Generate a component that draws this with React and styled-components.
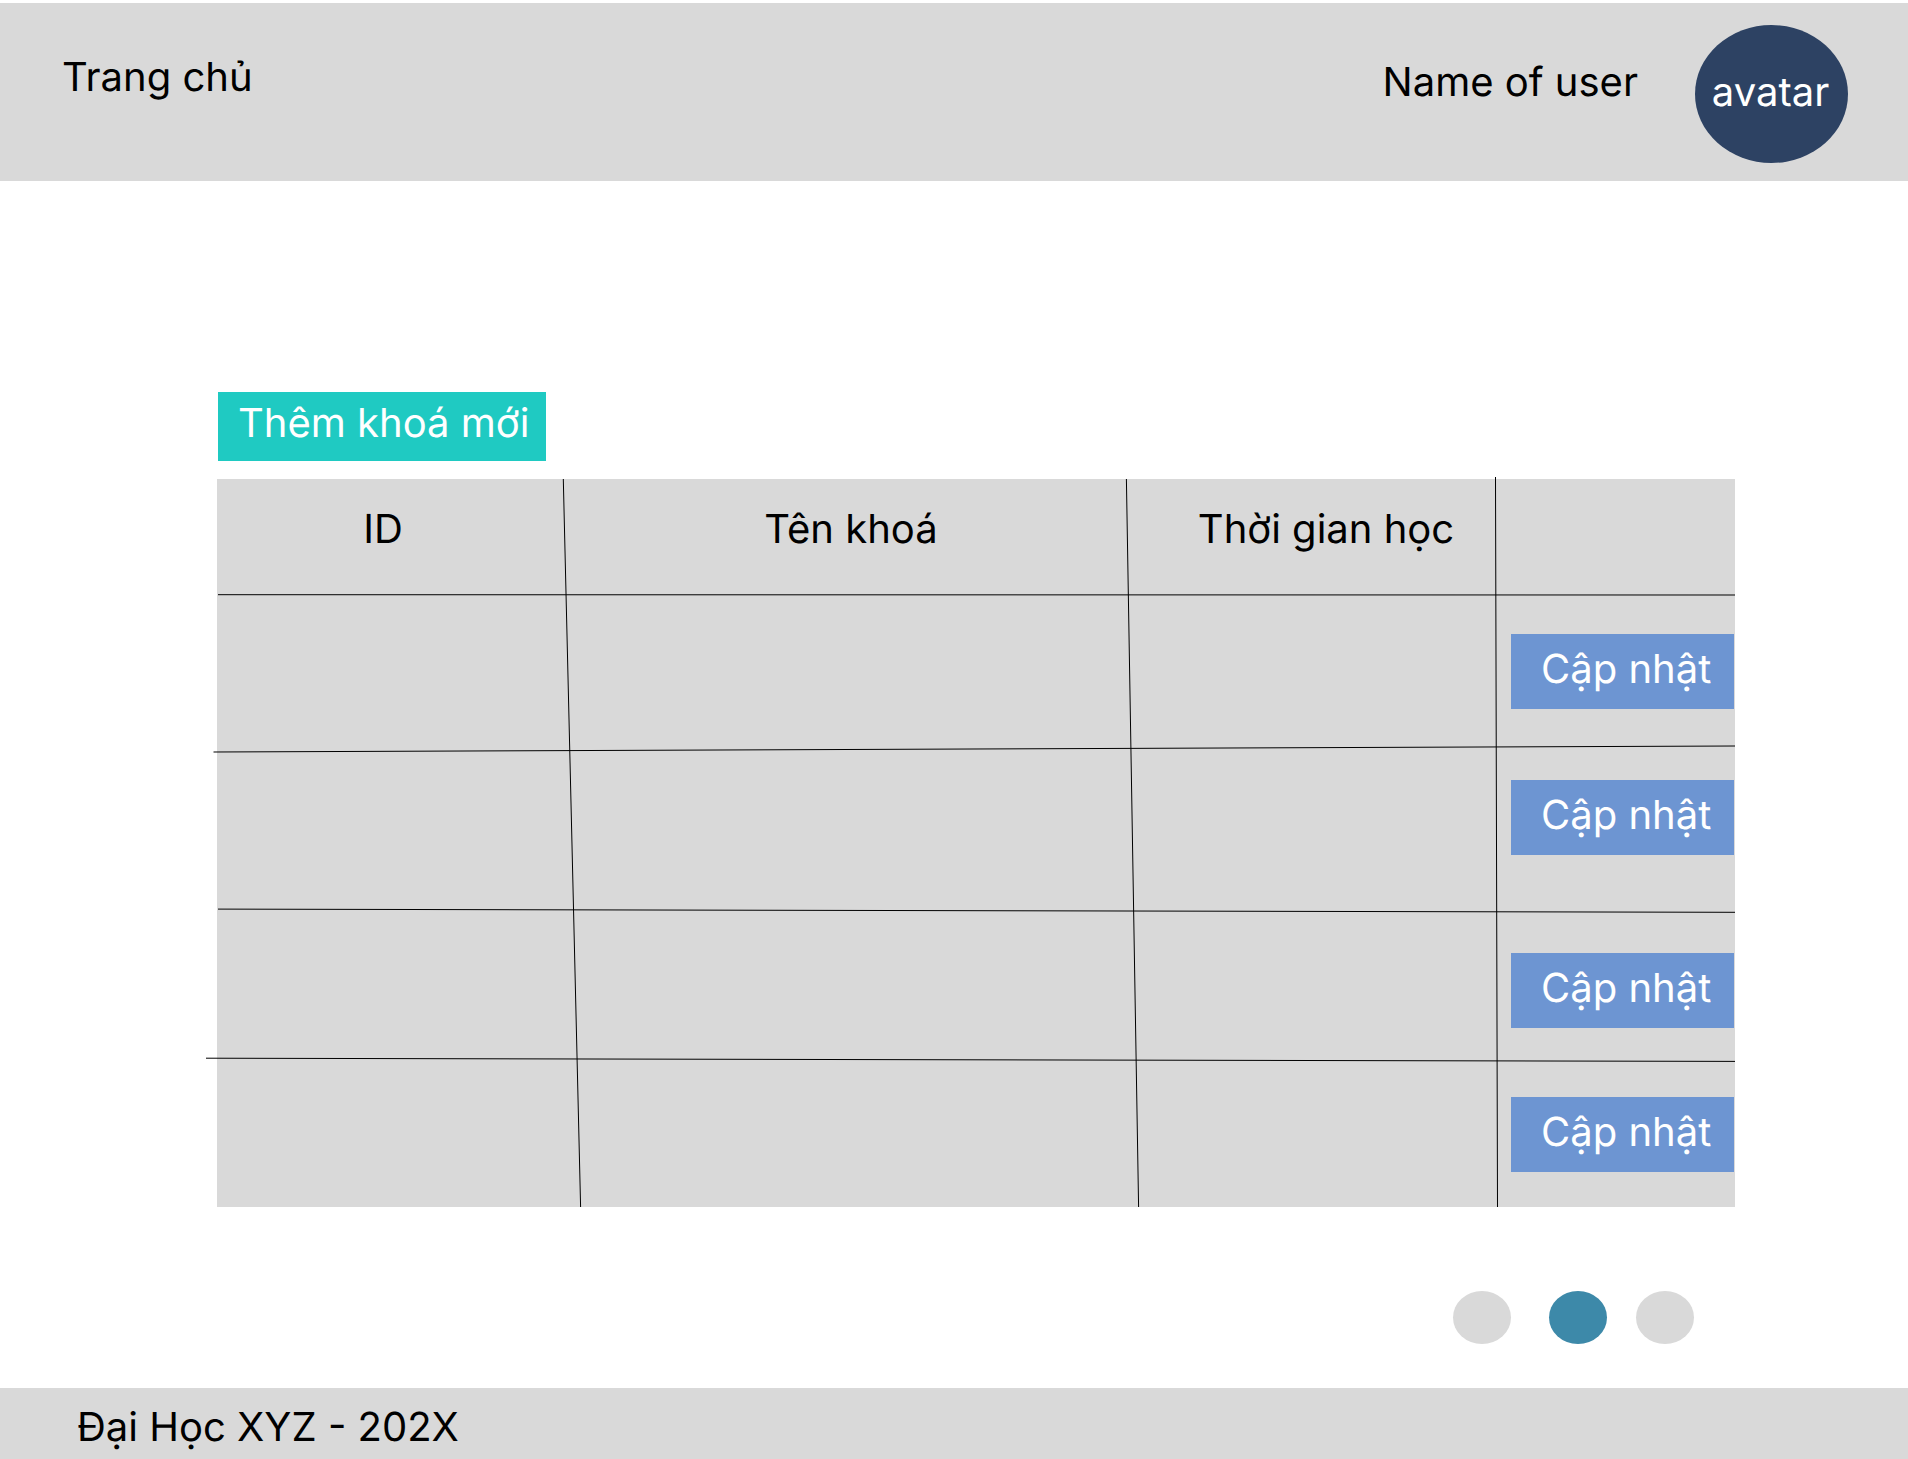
import React from "react";
import styled, { createGlobalStyle } from "styled-components";

const colors = {
  panel: "#d9d9d9",
  navy: "#2d4263",
  teal: "#1fcac2",
  blue: "#6d95d2",
  active: "#3d89a9",
};

const GlobalStyle = createGlobalStyle`
  *, *::before, *::after { box-sizing: border-box; }
  body {
    margin: 0;
    background: #fff;
    color: #000;
    font-family: Inter, "Noto Sans", sans-serif;
    font-size: 40px;
    font-weight: 400;
    line-height: 48px;
    text-rendering: geometricPrecision;
  }
  button {
    border: 0;
    font: inherit;
    text-rendering: inherit;
    cursor: pointer;
  }
`;

const Page = styled.div`
  display: flex;
  flex-direction: column;
  min-height: 100vh;
  padding-top: 3px;
`;

const Header = styled.header`
  display: flex;
  justify-content: space-between;
  align-items: flex-start;
  min-height: 178px;
  padding: 22px 60px 18px 62px;
  background: ${colors.panel};
`;

const HomeLink = styled.a`
  margin-top: 28px;
  color: inherit;
  text-decoration: none;
`;

const User = styled.div`
  display: flex;
  align-items: flex-start;
  gap: 57px;
`;

const UserName = styled.span`
  margin-top: 33px;
`;

const Avatar = styled.div`
  display: flex;
  align-items: center;
  justify-content: center;
  width: 153px;
  height: 138px;
  padding: 0 2px 4px 0;
  border-radius: 50%;
  background: ${colors.navy};
  color: #fff;
`;

const Main = styled.main`
  display: flex;
  flex-direction: column;
  align-items: flex-start;
  padding: 211px 173px 44px 217px;
`;

const AddButton = styled.button`
  margin: 0 0 18px 1px;
  padding: 7px 18px 14px 20px;
  width: 328px;
  background: ${colors.teal};
  color: #fff;
  text-align: left;
  white-space: nowrap;
`;

const TableFrame = styled.div`
  position: relative;
  width: 100%;
  background: ${colors.panel};
`;

const Rules = styled.svg`
  position: absolute;
  inset: 0;
  width: 100%;
  height: 100%;
  overflow: visible;
  pointer-events: none;

  line {
    stroke: #000;
    stroke-width: 1;
    vector-effect: non-scaling-stroke;
  }
`;

const Table = styled.table`
  width: 100%;
  table-layout: fixed;
  border-collapse: collapse;
`;

const Col = styled.col`
  width: ${(p) => p.$width};
`;

const HeadRow = styled.tr`
  height: 116px;
`;

const HeadCell = styled.th`
  padding: 26px ${(p) => p.$right || 0}px 0 ${(p) => p.$left || 0}px;
  font-weight: inherit;
  text-align: center;
  vertical-align: top;
  white-space: nowrap;
`;

const Row = styled.tr`
  height: ${(p) => p.$height}px;
`;

const Cell = styled.td`
  padding: 0;
`;

const ActionCell = styled.td`
  padding: ${(p) => p.$top}px 1px 0 16px;
  vertical-align: top;
`;

const UpdateButton = styled.button`
  display: block;
  width: 100%;
  padding: 11px 20px 16px 30px;
  background: ${colors.blue};
  color: #fff;
  text-align: left;
  white-space: nowrap;
`;

const Pager = styled.nav`
  display: flex;
  align-self: flex-end;
  margin: 84px 41px 0 0;
`;

const Dot = styled.button`
  width: 58px;
  height: 53px;
  padding: 0;
  border-radius: 50%;
  margin: ${(p) => (p.$active ? "0 29px 0 38px" : "0")};
  background: ${(p) => (p.$active ? colors.active : colors.panel)};
`;

const Footer = styled.footer`
  margin-top: auto;
  padding: 15px 77px 8px;
  background: ${colors.panel};
`;

const rows = [
  { id: 1, height: 154, top: 39 },
  { id: 2, height: 161, top: 31 },
  { id: 3, height: 150, top: 43 },
  { id: 4, height: 147, top: 37 },
];

// Hand-drawn rules in the table's own coordinates: x1, y1, x2, y2.
const rules = [
  [1, 115.7, 1518, 116],
  [-3.5, 273, 1518, 267],
  [1, 430.1, 1518, 433.3],
  [-11, 579.2, 1518, 582.4],
  [346.3, 0, 363.6, 728],
  [909.4, 0, 921.6, 728],
  [1278.5, -2, 1280.5, 728],
];

export default function App() {
  return (
    <>
      <GlobalStyle />
      <Page>
        <Header>
          <HomeLink href="#">Trang chủ</HomeLink>
          <User>
            <UserName>Name of user</UserName>
            <Avatar>avatar</Avatar>
          </User>
        </Header>

        <Main>
          <AddButton type="button">Thêm khoá mới</AddButton>
          <TableFrame>
            <Table>
              <colgroup>
                <Col $width="354px" />
                <Col $width="auto" />
                <Col $width="364px" />
                <Col $width="240px" />
              </colgroup>
              <thead>
                <HeadRow>
                  <HeadCell $right={22}>ID</HeadCell>
                  <HeadCell>Tên khoá</HeadCell>
                  <HeadCell $left={26}>Thời gian học</HeadCell>
                  <Cell />
                </HeadRow>
              </thead>
              <tbody>
                {rows.map((row) => (
                  <Row key={row.id} $height={row.height}>
                    <Cell />
                    <Cell />
                    <Cell />
                    <ActionCell $top={row.top}>
                      <UpdateButton type="button">Cập nhật</UpdateButton>
                    </ActionCell>
                  </Row>
                ))}
              </tbody>
            </Table>
            <Rules viewBox="0 0 1518 728" preserveAspectRatio="none" aria-hidden="true">
              {rules.map(([x1, y1, x2, y2], i) => (
                <line key={i} x1={x1} y1={y1} x2={x2} y2={y2} />
              ))}
            </Rules>
          </TableFrame>

          <Pager aria-label="Phân trang">
            <Dot type="button" aria-label="Trang 1" />
            <Dot type="button" aria-label="Trang 2" aria-current="page" $active />
            <Dot type="button" aria-label="Trang 3" />
          </Pager>
        </Main>

        <Footer>Đại Học XYZ - 202X</Footer>
      </Page>
    </>
  );
}
